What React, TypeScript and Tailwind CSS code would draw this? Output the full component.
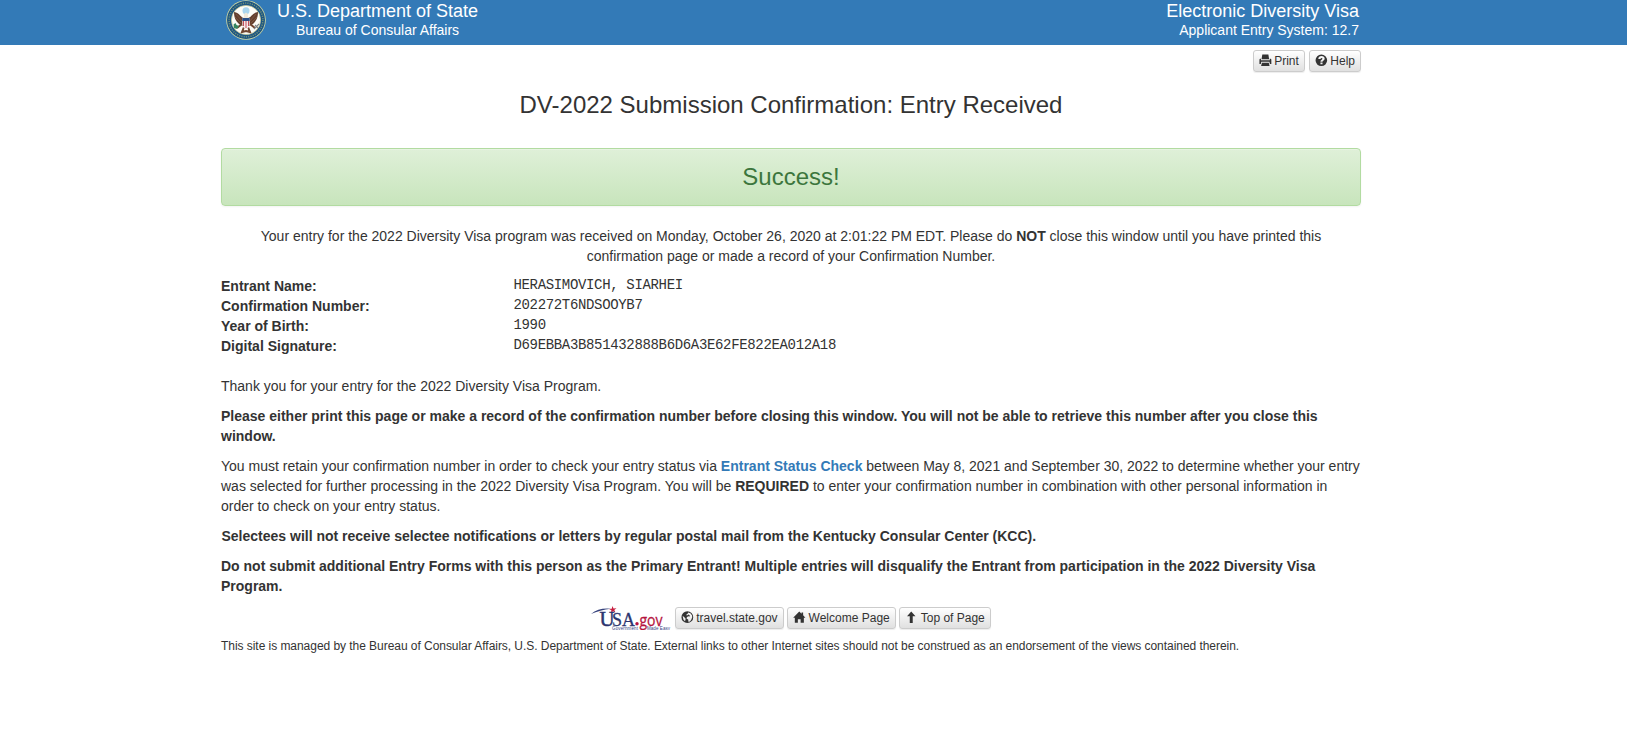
import type { ReactNode } from "react";

const icons = {
  print: "M3.300 .6h6.600l.8 5.100H2.500z M1.200 5.200h.7l-.2 1.500h9.800l-.2-1.500h.8c.6 0 1 .4 1 1v4.600h-1.600l-.5-2.300H2.200l-.5 2.300H.2V6.200c0-.6.4-1 1-1z M2.900 9.400h7.400l.9 3.600H2z",
  help: "M6.600 .5a6.300 6.300 0 1 0 0 12.600a6.300 6.300 0 1 0 0-12.600z M5.600 9.300h2.300v1.900H5.600z M3.300 5.400C3.300 3.500 4.700 2.300 6.800 2.300c2 0 3.400 1.100 3.400 2.800 0 1.900-2.300 2-2.300 3.400H5.600c0-2.200 2.200-2.200 2.200-3.300 0-.6-.4-.9-1-.9-.7 0-1.100.4-1.100 1.100z",
  globe: "M6.600 .3a6.400 6.400 0 1 0 0 12.800a6.400 6.400 0 1 0 0-12.800z M7.700 1.600l2.200.8 1.700 2.200.3 2.200-1.200 3-1.700 1.800-1.300.1-.2-2.400-1.700-1 .3-1.900 2-.7 1.500.2-.8-1.600-1.200-.4-1.200 1-1.200-.5 1.600-1.500z M1.500 5.200l1.500 1.300 1.500 1.400.2 1.500-.7 1.700-1.700-1.800z",
  home: "M6.500 .5L9 3V1.500h1.700v3.200l2.500 2.600h-1.700v5.500H8V9H5v3.800H1.700V7.300H-.1z",
  up: "M6.500 .6L11.100 5.800H8.100v7.200H4.900V5.800H1.900z",
};

function Icon({ name }: { name: keyof typeof icons }) {
  return (
    <svg viewBox="0 0 13 13" className="mb-[1.500px] h-3 w-[12.500px] shrink-0 overflow-visible" fill="currentColor" fillRule="evenodd" aria-hidden="true">
      <path d={icons[name]} />
    </svg>
  );
}

function Button({ icon, children }: { icon: keyof typeof icons; children: ReactNode }) {
  return (
    <button className="flex h-[22px] items-center gap-[3px] rounded-[3px] border border-[#ccc] bg-linear-to-b from-white to-[#e0e0e0] px-[5px] text-xs leading-[18px] whitespace-nowrap text-[#333] shadow-[inset_0_1px_0_rgba(255,255,255,.15),0_1px_1px_rgba(0,0,0,.075)]">
      <Icon name={icon} />
      {children}
    </button>
  );
}

function Seal() {
  return (
    <svg viewBox="0 0 40 40" className="size-10" aria-hidden="true">
      <circle cx="20" cy="20" r="19.800" fill="#d5dba0" />
      <circle cx="20" cy="20" r="19" fill="#1c5583" />
      <circle cx="20" cy="20" r="16.900" fill="none" stroke="#6f9079" strokeWidth="1.500" strokeDasharray="1.200 1.100" />
      <circle cx="20" cy="20" r="14.600" fill="#fcfcf7" stroke="#c9c98b" strokeWidth=".7" />
      <circle cx="20" cy="10.800" r="3.500" fill="#a9d5ee" />
      <path d="M18 18c-3 0-4-5-10-6 0 6 2 9 5 12l4 2zM22 18c3 0 4-5 10-6 0 6-2 9-5 12l-4 2z" fill="#64402f" />
      <path d="M10 14l6 7M9 17l6 6M30 14l-6 7M31 17l-6 6" stroke="#8e654a" strokeWidth=".6" />
      <path d="M18 14l2-1.500 2 1.500v5h-4z" fill="#eee8da" />
      <path d="M16 24l-5 4M24 24l5 4M18 27l-2 5 4-1 4 1-2-5" stroke="#70452f" strokeWidth="2" fill="none" />
      <path d="M16.300 18h7.400v7q-.7 3-3.700 4-3-1-3.700-4z" fill="#f5eaea" />
      <path d="M17.500 20v6M20 20v8M22.500 20v6" stroke="#c34d57" strokeWidth="1" />
      <path d="M16.300 18h7.400v3h-7.400z" fill="#274e86" />
      <path d="M7.500 24.500l2-1.500 1 2 2.500 1-2 3-3-1z" fill="#36865f" />
      <path d="M28 29l5-5M29 25l3 3" stroke="#7f8486" strokeWidth="1.200" />
    </svg>
  );
}

function UsaGov() {
  return (
    <svg viewBox="0 0 80 24" className="h-6 w-20" role="img" aria-label="USA.gov">
      <path d="M0 8Q8 1.500 20 2.800Q9 4 0 8z" fill="#36427c" />
      <path d="M21.500 0l1 2.500 3-.3-2.200 1.800 1.200 2.600-2.500-1.400-2 1.800.4-2.800-2.400-1.200 2.700-.3z" fill="#c71f40" />
      <text x="8.500" y="19.500" fontSize="20" textLength="15" lengthAdjust="spacingAndGlyphs" fill="#2b356f" stroke="#2b356f" strokeWidth=".5" className="font-['Liberation_Serif',serif]">U</text>
      <text x="21" y="19.500" fontSize="19" textLength="23" lengthAdjust="spacingAndGlyphs" fill="#2b356f" stroke="#2b356f" strokeWidth=".3" className="font-['Liberation_Serif',serif]">SA</text>
      <circle cx="46" cy="17.700" r="1.700" fill="#b51440" />
      <text x="48.500" y="19.500" fontSize="16.500" textLength="23" lengthAdjust="spacingAndGlyphs" fill="#b51440" stroke="#b51440" strokeWidth=".3" className="font-['Open_Sans',sans-serif]">gov</text>
      <text x="21" y="23.500" fontSize="4.500" textLength="26" fill="#34427f" className="font-['Liberation_Sans',sans-serif]">Government</text>
      <text x="56" y="23.500" fontSize="4.500" textLength="23" fill="#34427f" className="font-['Liberation_Sans',sans-serif]">Made Easy</text>
    </svg>
  );
}

const details = [
  ["Entrant Name:", "HERASIMOVICH, SIARHEI"],
  ["Confirmation Number:", "202272T6NDSOOYB7"],
  ["Year of Birth:", "1990"],
  ["Digital Signature:", "D69EBBA3B851432888B6D6A3E62FE822EA012A18"],
];

export default function App() {
  return (
    <div className="min-h-screen bg-white font-['Liberation_Sans',Arial,sans-serif] text-sm leading-5 text-[#333]">
      <header className="h-[45px] bg-[#337ab7] pl-[221px] text-white">
        <div className="flex w-[1140px] justify-between pr-0.5 pl-[5px]">
          <div className="flex gap-[11px]">
            <Seal />
            <div className="pt-px text-center">
              <div className="text-lg leading-5">U.S. Department of State</div>
              <div className="leading-[18px]">Bureau of Consular Affairs</div>
            </div>
          </div>
          <div className="pt-px text-right">
            <div className="text-lg leading-5">Electronic Diversity Visa</div>
            <div className="leading-[18px]">Applicant Entry System: 12.7</div>
          </div>
        </div>
      </header>
      <main className="ml-[221px] w-[1140px]">
        <div className="flex justify-end gap-1 pt-[5px]">
          <Button icon="print">Print</Button>
          <Button icon="help">Help</Button>
        </div>
        <h1 className="mt-5 text-center text-2xl leading-[26px]">DV-2022 Submission Confirmation: Entry Received</h1>
        <div className="mt-[30px] flex h-[58px] items-center justify-center rounded border border-[#b2dba1] bg-linear-to-b from-[#dff0d8] to-[#c8e5bc] text-2xl text-[#3c763d] shadow-[inset_0_1px_0_rgba(255,255,255,.25),0_1px_2px_rgba(0,0,0,.05)]">
          Success!
        </div>
        <p className="mt-5 px-[30px] text-center">
          Your entry for the 2022 Diversity Visa program was received on Monday, October 26, 2020 at 2:01:22 PM EDT. Please do <b>NOT</b> close this window until you have printed this confirmation page or made a record of your Confirmation Number.
        </p>
        <dl className="mt-[10px]">
          {details.map(([label, value]) => (
            <div key={label} className="flex h-5">
              <dt className="w-[292.500px] font-bold">{label}</dt>
              <dd className="font-['Liberation_Mono',monospace] leading-[19px] tracking-[-0.34px]">{value}</dd>
            </div>
          ))}
        </dl>
        <div className="mt-5 flex flex-col gap-[10px]">
          <p>Thank you for your entry for the 2022 Diversity Visa Program.</p>
          <p className="font-bold">Please either print this page or make a record of the confirmation number before closing this window. You will not be able to retrieve this number after you close this window.</p>
          <p>
            You must retain your confirmation number in order to check your entry status via <a className="font-bold text-[#337ab7]">Entrant Status Check</a> between May 8, 2021 and September 30, 2022 to determine whether your entry was selected for further processing in the 2022 Diversity Visa Program. You will be <b>REQUIRED</b> to enter your confirmation number in combination with other personal information in order to check on your entry status.
          </p>
          <p className="pl-[0.5px] font-bold">Selectees will not receive selectee notifications or letters by regular postal mail from the Kentucky Consular Center (KCC).</p>
          <p className="font-bold">Do not submit additional Entry Forms with this person as the Primary Entrant! Multiple entries will disqualify the Entrant from participation in the 2022 Diversity Visa Program.</p>
        </div>
        <footer>
          <div className="mt-[10px] flex items-center justify-center gap-[3.500px]">
            <UsaGov />
            <Button icon="globe">travel.state.gov</Button>
            <Button icon="home">Welcome Page</Button>
            <Button icon="up">Top of Page</Button>
          </div>
          <p className="mt-2 text-xs leading-[17px] tracking-[-0.046px]">This site is managed by the Bureau of Consular Affairs, U.S. Department of State. External links to other Internet sites should not be construed as an endorsement of the views contained therein.</p>
        </footer>
      </main>
    </div>
  );
}
